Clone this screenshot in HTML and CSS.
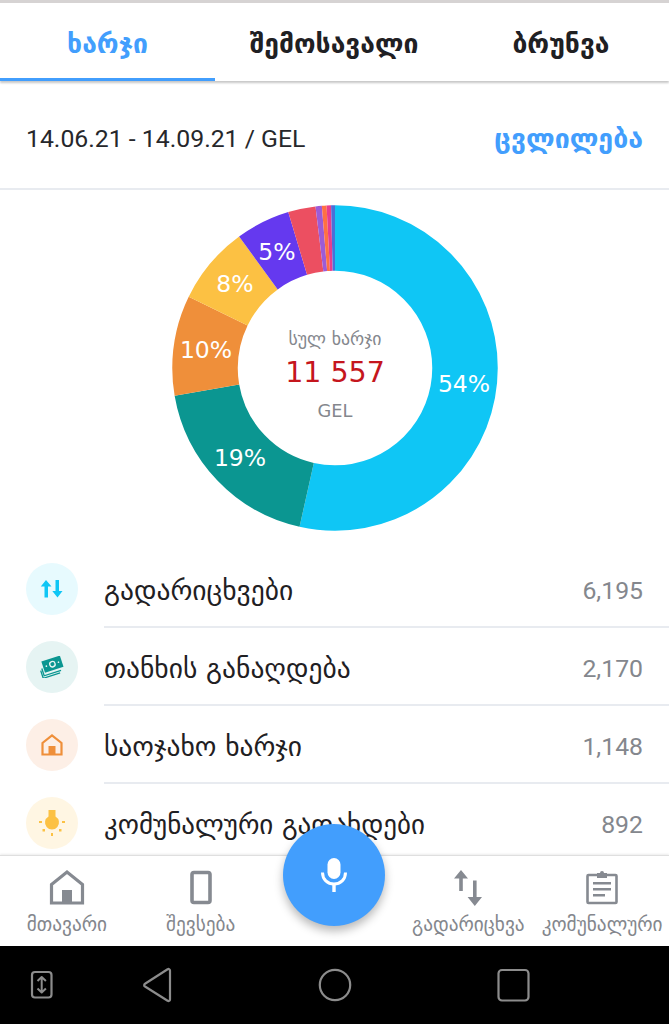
FILE: index.html
```html
<!DOCTYPE html>
<html lang="ka">
<head>
<meta charset="utf-8">
<title>ხარჯი</title>
<link rel="stylesheet" href="styles.css">
</head>
<body>
<div class="screen">
  <div class="status-strip"></div>
  <nav class="tabs">
    <div class="tab tab-active">ხარჯი</div>
    <div class="tab">შემოსავალი</div>
    <div class="tab">ბრუნვა</div>
  </nav>
  <main class="content">
    <div class="period">
      <span class="period-text">14.06.21 - 14.09.21 / GEL</span>
      <span class="period-link">ცვლილება</span>
    </div>
    <div class="chart-wrap">
      <svg class="chart" width="330" height="330" viewBox="0 0 330 330">
        <g transform="rotate(-90 165 165)" fill="none" stroke-width="65.5">
          <circle cx="165" cy="165" r="130" pathLength="360" stroke="#0fc6f5" stroke-dasharray="192.6 360"/>
          <circle cx="165" cy="165" r="130" pathLength="360" stroke="#0b9691" stroke-dasharray="67.6 360" stroke-dashoffset="-192.6"/>
          <circle cx="165" cy="165" r="130" pathLength="360" stroke="#ef8f3a" stroke-dasharray="35.8 360" stroke-dashoffset="-260.2"/>
          <circle cx="165" cy="165" r="130" pathLength="360" stroke="#fcc143" stroke-dasharray="27.9 360" stroke-dashoffset="-296"/>
          <circle cx="165" cy="165" r="130" pathLength="360" stroke="#6539ef" stroke-dasharray="19.4 360" stroke-dashoffset="-323.9"/>
          <circle cx="165" cy="165" r="130" pathLength="360" stroke="#ec4f61" stroke-dasharray="9.8 360" stroke-dashoffset="-343.3"/>
          <circle cx="165" cy="165" r="130" pathLength="360" stroke="#9d5bd6" stroke-dasharray="2.25 360" stroke-dashoffset="-353.1"/>
          <circle cx="165" cy="165" r="130" pathLength="360" stroke="#ff7043" stroke-dasharray="1.65 360" stroke-dashoffset="-355.35"/>
          <circle cx="165" cy="165" r="130" pathLength="360" stroke="#e83e8c" stroke-dasharray="1.6 360" stroke-dashoffset="-357"/>
          <circle cx="165" cy="165" r="130" pathLength="360" stroke="#4a6fd8" stroke-dasharray="1.4 360" stroke-dashoffset="-358.6"/>
        </g>
        <text class="pct" x="294" y="189" text-anchor="middle">54%</text>
        <text class="pct" x="70" y="263" text-anchor="middle">19%</text>
        <text class="pct" x="36" y="155" text-anchor="middle">10%</text>
        <text class="pct" x="65" y="89" text-anchor="middle">8%</text>
        <text class="pct" x="107" y="57" text-anchor="middle">5%</text>
        <text class="sum-label" x="165" y="142" text-anchor="middle">სულ ხარჯი</text>
        <text class="sum-value" x="165" y="179" text-anchor="middle">11 557</text>
        <text class="sum-unit" x="165" y="214" text-anchor="middle">GEL</text>
      </svg>
    </div>
    <ul class="list">
      <li class="row">
        <span class="badge badge-cyan">
          <svg width="24" height="20" viewBox="0 0 24 20"><path fill="#0fc6f5" d="M6 1l5.500 6.500H8v11H4.500v-11H.8zM15.500 1H19v11h3.500L17.500 18.500 12.300 12h3.200z"/></svg>
        </span>
        <div class="row-body"><span class="row-name">გადარიცხვები</span><span class="row-val">6,195</span></div>
      </li>
      <li class="row">
        <span class="badge badge-teal">
          <svg width="24" height="22" viewBox="0 0 28 26"><g transform="rotate(-18 14 13)"><path fill="none" stroke="#0b9691" stroke-width="1.600" d="M2 11v9h21"/><path fill="none" stroke="#0b9691" stroke-width="1.600" d="M0 13v9.500h21"/><rect x="4" y="3" width="23" height="14" fill="#0b9691"/><circle cx="15.500" cy="10" r="3.200" fill="none" stroke="#e9f5f3" stroke-width="1.600"/><circle cx="8" cy="10" r="1" fill="#e9f5f3"/><circle cx="23" cy="10" r="1" fill="#e9f5f3"/></g></svg>
        </span>
        <div class="row-body"><span class="row-name">თანხის განაღდება</span><span class="row-val">2,170</span></div>
      </li>
      <li class="row">
        <span class="badge badge-orange">
          <svg width="22" height="22" viewBox="0 0 22 22"><path fill="none" stroke="#ef8f3a" stroke-width="2.200" d="M1.500 20.500V9L11 1.500 20.500 9v11.500z"/><rect x="7.500" y="12" width="7" height="8" fill="#ef8f3a"/></svg>
        </span>
        <div class="row-body"><span class="row-name">საოჯახო ხარჯი</span><span class="row-val">1,148</span></div>
      </li>
      <li class="row">
        <span class="badge badge-yellow">
          <svg width="26" height="26" viewBox="0 0 26 26"><path fill="#fcc143" d="M9.500 0h7v6.500a7 7 0 1 1-7 0z"/><g fill="#fcc143"><rect x="0" y="11" width="3" height="2"/><rect x="23" y="11" width="3" height="2"/><rect x="12" y="23" width="2" height="3"/><rect x="3.500" y="19" width="2.500" height="2.500"/><rect x="20" y="19" width="2.500" height="2.500"/></g></svg>
        </span>
        <div class="row-body"><span class="row-name row-name-long">კომუნალური გადახდები</span><span class="row-val">892</span></div>
      </li>
    </ul>
  </main>
  <footer class="bottom-nav">
    <div class="nav-item">
      <svg class="nav-icon" width="36" height="38" viewBox="0 0 36 38"><path fill="none" stroke="#868a91" stroke-width="3.200" d="M2.500 34V15.500L18 3l15.500 12.500V34z"/><rect x="13" y="21" width="10" height="13" fill="#868a91"/></svg>
      <span class="nav-label">მთავარი</span>
    </div>
    <div class="nav-item">
      <svg class="nav-icon" width="36" height="38" viewBox="0 0 36 38"><rect x="9" y="3.500" width="18" height="30" rx="2" fill="none" stroke="#868a91" stroke-width="3.600"/></svg>
      <span class="nav-label">შევსება</span>
    </div>
    <div class="nav-item nav-spacer"></div>
    <div class="nav-item">
      <svg class="nav-icon" width="36" height="38" viewBox="0 0 36 38"><path fill="#868a91" d="M11 1l7 8.500h-5.200V22H9.200V9.500H4zM23 11.500h3.600V28H32l-7.200 9-7.200-9H23z"/></svg>
      <span class="nav-label">გადარიცხვა</span>
    </div>
    <div class="nav-item">
      <svg class="nav-icon" width="36" height="38" viewBox="0 0 36 38"><path fill="none" stroke="#868a91" stroke-width="2.600" d="M4.500 6h27a1 1 0 0 1 1 1v26a1 1 0 0 1-1 1h-27a1 1 0 0 1-1-1V7a1 1 0 0 1 1-1z"/><path fill="#868a91" d="M13 4h3a2 2 0 0 1 4 0h3v5H13zM9 13h18v2.500H9zM9 19h18v2.500H9zM9 25h12v2.500H9z"/></svg>
      <span class="nav-label">კომუნალური</span>
    </div>
  </footer>
  <button class="fab" type="button" aria-label="mic">
    <svg width="32" height="36" viewBox="0 0 32 36"><rect x="9.500" y="1" width="13" height="21" rx="6.500" fill="#fff"/><path fill="none" stroke="#fff" stroke-width="3" d="M4.500 15.500c0 7 5 11.500 11.500 11.500s11.500-4.500 11.500-11.500"/><rect x="14.300" y="26" width="3.400" height="9" fill="#fff"/></svg>
  </button>
  <div class="system-nav">
    <svg width="669" height="78" viewBox="0 0 669 78" fill="none" stroke="#8c8c8c" stroke-width="2.200" stroke-linejoin="round">
      <rect x="32" y="26" width="19.500" height="25.500" rx="3"/>
      <path stroke-width="2" d="M41.700 31.500v14.500M37.500 35l4.200-4 4.200 4M37.500 42.500l4.200 4 4.200-4"/>
      <path d="M170 24.500v29a1.500 1.500 0 0 1-2.400 1.200L145 40.500a1.500 1.500 0 0 1 0-2.700L167.600 23.300a1.500 1.500 0 0 1 2.400 1.200z"/>
      <circle cx="335" cy="39" r="15.200"/>
      <rect x="498.500" y="24" width="30" height="30.500" rx="3.500"/>
    </svg>
  </div>
</div>
</body>
</html>
```

FILE: styles.css
```css
* { box-sizing: border-box; }
html, body { margin: 0; padding: 0; background: #fff; }
.screen {
  position: relative;
  width: 669px;
  height: 1024px;
  display: flex;
  flex-direction: column;
  overflow: hidden;
  font-family: "DejaVu Sans", sans-serif;
  color: #1f2023;
}
.status-strip { height: 3px; background: #d6d3d3; flex: none; }
.tabs {
  flex: none;
  height: 78px;
  display: grid;
  grid-template-columns: 215px 238px 216px;
  box-shadow: 0 2px 2px rgba(0,0,0,.22);
  position: relative;
}
.tab {
  display: flex;
  align-items: center;
  justify-content: center;
  padding-top: 3px;
  font-size: 26.500px;
  font-weight: 700;
  white-space: nowrap;
}
.tab-active { color: #429efd; border-bottom: 3px solid #429efd; padding-top: 6px; }
.content { flex: 1; min-height: 0; overflow: hidden; }
.period {
  height: 109px;
  display: flex;
  align-items: center;
  justify-content: space-between;
  padding: 7px 26px 0 26px;
  border-bottom: 2px solid #e8ebf0;
}
.period-text { font-family: Roboto, sans-serif; font-size: 24.800px; color: #26272b; }
.period-link { color: #429efd; font-size: 26.700px; font-weight: 700; white-space: nowrap; }
.chart-wrap { display: flex; justify-content: center; height: 360px; padding-top: 13px; }
.chart { display: block; }
.pct { fill: #fff; font-size: 23.500px; }
.sum-label { fill: #84878d; font-size: 17.800px; }
.sum-value { fill: #c5161d; font-size: 28.500px; }
.sum-unit { fill: #84878d; font-size: 17.800px; }
.list { list-style: none; margin: 0; padding: 0 0 0 26px; }
.row { height: 78px; display: flex; align-items: stretch; gap: 26px; }
.badge {
  flex: none;
  width: 52px;
  height: 52px;
  margin-top: 13px;
  border-radius: 50%;
  display: flex;
  align-items: center;
  justify-content: center;
}
.badge-cyan { background: #e7fafe; }
.badge-teal { background: #e6f4f3; }
.badge-orange { background: #fdefe6; }
.badge-yellow { background: #fff6e3; }
.row-body {
  flex: 1;
  min-width: 0;
  display: flex;
  align-items: center;
  justify-content: space-between;
  padding: 4px 26px 0 0;
  border-bottom: 2px solid #e8ebf0;
}
.row-name { font-size: 27.500px; white-space: nowrap; }
.row-name-long { font-size: 27px; }
.row-val { font-family: Roboto, sans-serif; font-size: 24.800px; color: #84878d; }
.bottom-nav {
  flex: none;
  height: 91px;
  display: grid;
  grid-template-columns: repeat(5, 1fr);
  background: #fff;
  border-top: 1px solid #dfdfdf;
  box-shadow: 0 -1px 2px rgba(0,0,0,.08);
  position: relative;
}
.nav-item {
  display: flex;
  flex-direction: column;
  align-items: center;
  padding-top: 13px;
  white-space: nowrap;
  min-width: 0;
}
.nav-icon { display: block; flex: none; }
.nav-label { font-size: 19.300px; line-height: 22px; color: #84878d; margin-top: 7px; }
.fab {
  position: absolute;
  left: 283px;
  top: 824px;
  width: 102px;
  height: 102px;
  border: 0;
  padding: 0;
  border-radius: 50%;
  background: #429efd;
  box-shadow: 0 5px 10px rgba(0,0,0,.28);
  display: flex;
  align-items: center;
  justify-content: center;
}
.system-nav { flex: none; height: 78px; background: #000; }
.system-nav svg { display: block; }
```
